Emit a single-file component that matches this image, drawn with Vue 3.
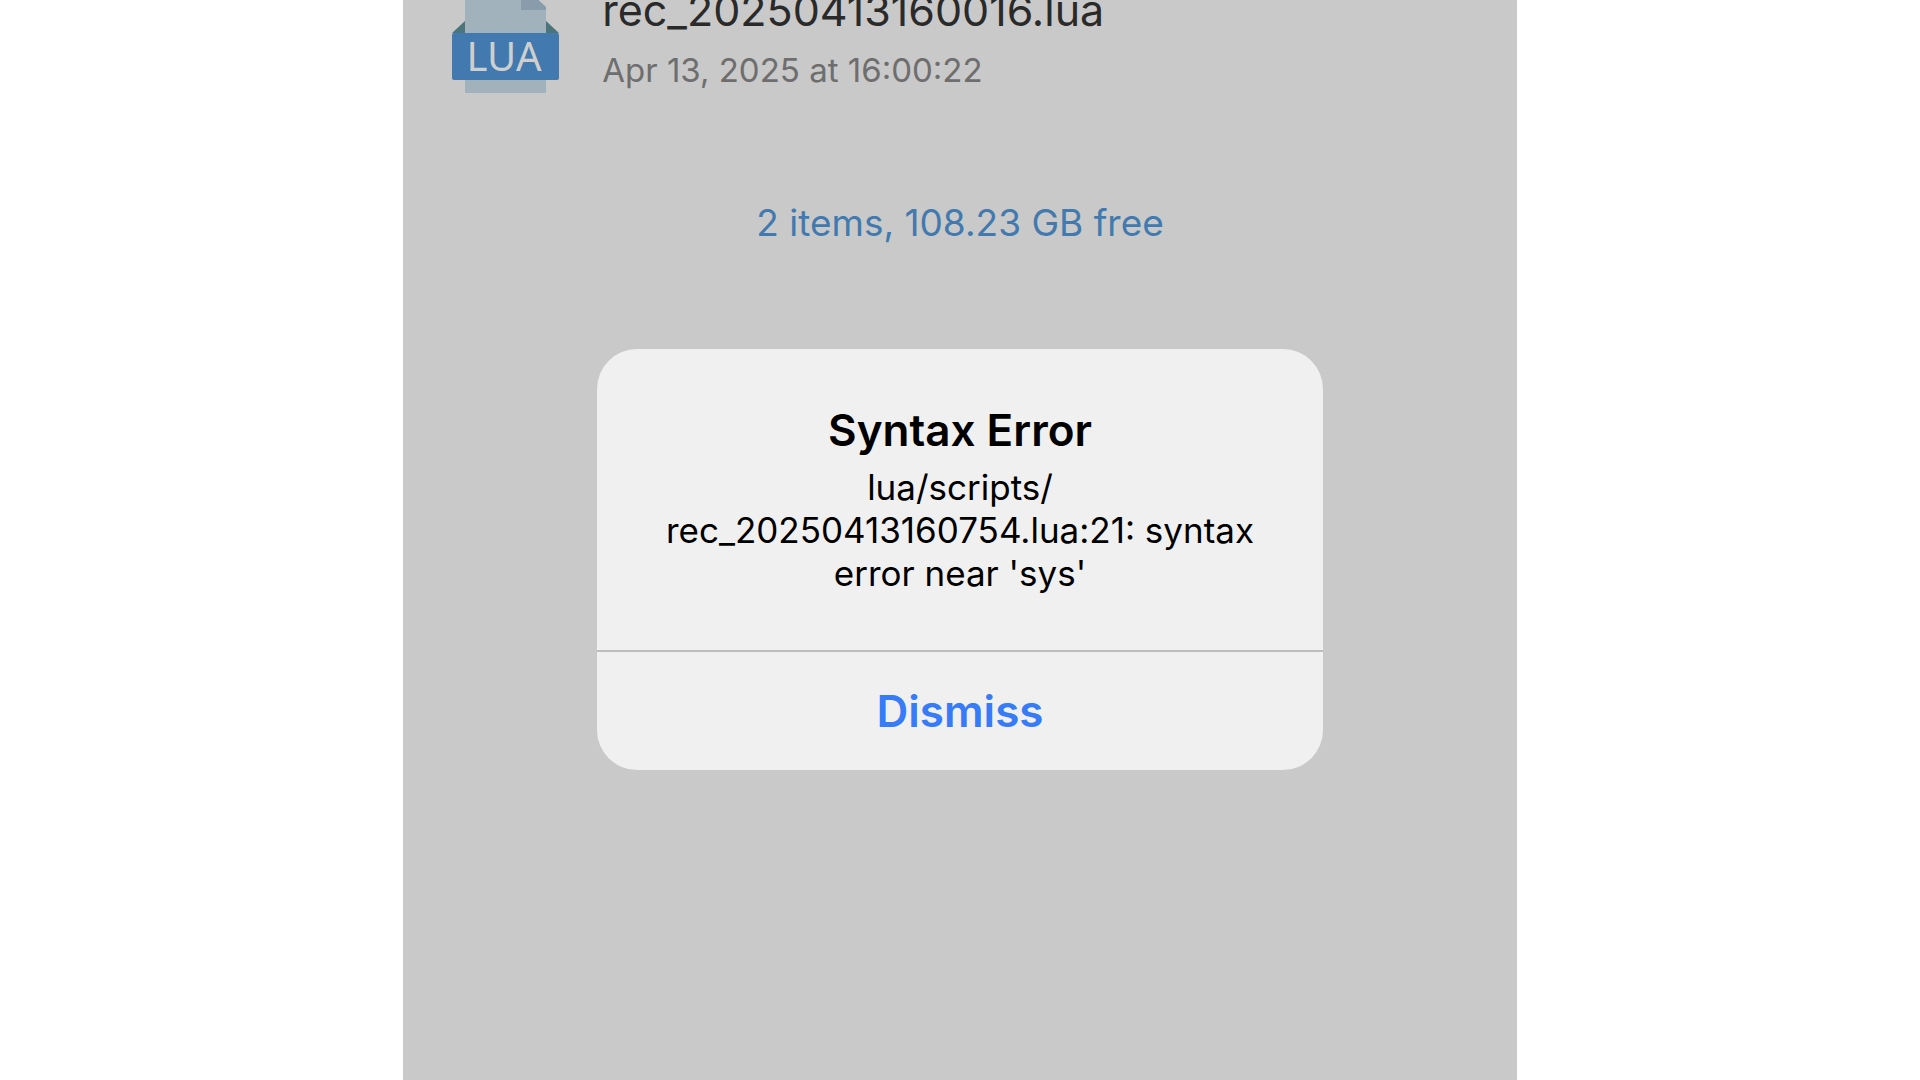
<script setup>
import { ref } from 'vue'

const files = [
  { name: 'rec_20250413160016.lua', date: 'Apr 13, 2025 at 16:00:22' },
]
const summary = '2 items, 108.23 GB free'
const alertOpen = ref(true)
</script>

<template>
  <div class="page">
    <main class="screen">
      <ul class="files">
        <li v-for="file in files" :key="file.name">
          <a class="file" href="#">
            <svg class="file-icon" viewBox="0 0 108 124" aria-hidden="true">
              <path fill="#4b757b" d="M0 64 13 52V64ZM107 64 94 52V64Z" />
              <path fill="#a2b2bc" d="M13 0H70L94 38V124H13Z" />
              <path fill="#c9c9c9" d="M70 0H108V50H94V38L86 31H70Z" />
              <path fill="#899cab" d="M69 24H79L94 38V41H69Z" />
              <rect y="64" width="107" height="47" rx="2" fill="#4279ae" />
              <text class="file-type" x="52" y="102" text-anchor="middle">LUA</text>
            </svg>
            <span class="file-text">
              <span class="file-name">{{ file.name }}</span>
              <span class="file-date">{{ file.date }}</span>
            </span>
          </a>
        </li>
      </ul>
      <p class="summary">{{ summary }}</p>

      <div v-if="alertOpen" class="overlay">
        <section class="alert" role="alertdialog" aria-labelledby="alert-title" aria-describedby="alert-message">
          <div class="alert-body">
            <h1 id="alert-title">Syntax Error</h1>
            <p id="alert-message">lua/scripts/<wbr />rec_20250413160754.lua:21: syntax error near 'sys'</p>
          </div>
          <button type="button" @click="alertOpen = false">Dismiss</button>
        </section>
      </div>
    </main>
  </div>
</template>

<style>
body {
  margin: 0;
  background: #fff;
}
</style>

<style scoped>
.page {
  display: flex;
  justify-content: center;
  font-family: Inter, "Liberation Sans", sans-serif;
}

.screen {
  position: relative;
  width: 58%;
  min-height: 100vh;
  overflow: hidden;
  background: #c9c9c9;
}

.files {
  margin: -31px 0 0;
  padding: 0 49px;
  list-style: none;
}

.file {
  display: flex;
  align-items: flex-end;
  gap: 42px;
  text-decoration: none;
}

.file-icon {
  flex: none;
  width: 108px;
  height: 124px;
}

.file-type {
  font: 400 40px "Noto Sans", sans-serif;
  fill: #cfcfcf;
}

.file-text {
  display: flex;
  flex-direction: column;
  gap: 12px;
  padding-bottom: 1px;
}

.file-name {
  font-size: 43px;
  line-height: 52px;
  color: #2a2a2a;
}

.file-date {
  font-size: 33px;
  line-height: 44px;
  color: #6e6e6e;
}

.summary {
  margin: 108px 0 0;
  font-size: 37px;
  line-height: 44px;
  text-align: center;
  color: #4279ae;
}

.overlay {
  position: absolute;
  inset: 0;
  display: flex;
  align-items: center;
  justify-content: center;
  padding-top: 39px;
}

.alert {
  width: 726px;
  overflow: hidden;
  border-radius: 40px;
  background: #f0f0f0;
  text-align: center;
  color: #000;
}

.alert-body {
  padding: 51px 60px 55px;
}

.alert h1 {
  margin: 0;
  font-size: 44px;
  font-weight: 600;
  line-height: 60px;
}

.alert p {
  margin: 6px 0 0;
  font-size: 35px;
  line-height: 43px;
}

.alert button {
  display: block;
  width: 100%;
  height: 120px;
  padding: 0;
  border: 0;
  border-top: 2px solid #bdbdbd;
  background: none;
  font: 600 44px Inter, "Liberation Sans", sans-serif;
  color: #377bf7;
}
</style>
